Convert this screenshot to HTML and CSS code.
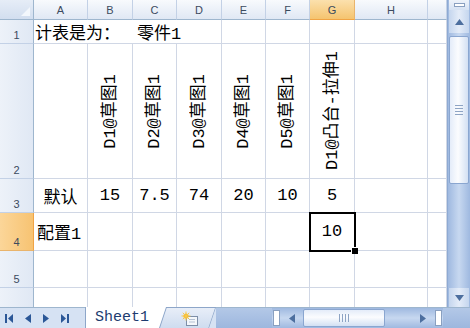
FILE: index.html
```html
<!DOCTYPE html>
<html lang="zh">
  <head>
    <meta charset="UTF-8" />
    <title>系列零件设计表</title>
    <link rel="stylesheet" href="styles.css">
  </head>
  <body>
    <div class="window">
      <div class="main">
        <div class="sheet">
          <div class="corner"></div>
          <div class="col-head">A</div>
          <div class="col-head">B</div>
          <div class="col-head">C</div>
          <div class="col-head">D</div>
          <div class="col-head">E</div>
          <div class="col-head">F</div>
          <div class="col-head active">G</div>
          <div class="col-head">H</div>
          <div class="col-head"></div>

          <div class="row-head">1</div>
          <div class="cell title">计表是为：<span class="part">零件1</span></div>
          <div class="cell"></div>
          <div class="cell"></div>
          <div class="cell"></div>
          <div class="cell"></div>
          <div class="cell"></div>

          <div class="row-head">2</div>
          <div class="cell"></div>
          <div class="cell vert"><span>D1@草图1</span></div>
          <div class="cell vert"><span>D2@草图1</span></div>
          <div class="cell vert"><span>D3@草图1</span></div>
          <div class="cell vert"><span>D4@草图1</span></div>
          <div class="cell vert"><span>D5@草图1</span></div>
          <div class="cell vert"><span>D1@凸台-拉伸1</span></div>
          <div class="cell"></div>
          <div class="cell"></div>

          <div class="row-head">3</div>
          <div class="cell">默认</div>
          <div class="cell">15</div>
          <div class="cell">7.5</div>
          <div class="cell">74</div>
          <div class="cell">20</div>
          <div class="cell">10</div>
          <div class="cell">5</div>
          <div class="cell"></div>
          <div class="cell"></div>

          <div class="row-head active">4</div>
          <div class="cell left">配置1</div>
          <div class="cell"></div>
          <div class="cell"></div>
          <div class="cell"></div>
          <div class="cell"></div>
          <div class="cell"></div>
          <div class="cell selected">10</div>
          <div class="cell"></div>
          <div class="cell"></div>

          <div class="row-head">5</div>
          <div class="cell"></div>
          <div class="cell"></div>
          <div class="cell"></div>
          <div class="cell"></div>
          <div class="cell"></div>
          <div class="cell"></div>
          <div class="cell"></div>
          <div class="cell"></div>
          <div class="cell"></div>

          <div class="row-head">6</div>
          <div class="cell"></div>
          <div class="cell"></div>
          <div class="cell"></div>
          <div class="cell"></div>
          <div class="cell"></div>
          <div class="cell"></div>
          <div class="cell"></div>
          <div class="cell"></div>
          <div class="cell"></div>
        </div>

        <div class="vscroll">
          <div class="split"><span></span></div>
          <div class="sb-btn up">
            <svg width="9" height="6" viewBox="0 0 9 6"><path d="M0 6 L4.5 0 L9 6 Z" fill="#4d6f9f"/></svg>
          </div>
          <div class="vthumb"><span></span><span></span><span></span><span></span></div>
          <div class="track"></div>
          <div class="sb-btn down">
            <svg width="9" height="6" viewBox="0 0 9 6"><path d="M0 0 L9 0 L4.5 6 Z" fill="#4d6f9f"/></svg>
          </div>
        </div>
      </div>

      <div class="tabbar">
        <div class="nav">
          <svg width="8" height="9" viewBox="0 0 8 9"><rect x="0" y="0" width="2" height="9" fill="#2b5797"/><path d="M8 0 L3 4.5 L8 9 Z" fill="#2b5797"/></svg>
          <svg width="6" height="9" viewBox="0 0 6 9"><path d="M6 0 L0 4.5 L6 9 Z" fill="#2b5797"/></svg>
          <svg width="6" height="9" viewBox="0 0 6 9"><path d="M0 0 L6 4.5 L0 9 Z" fill="#2b5797"/></svg>
          <svg width="8" height="9" viewBox="0 0 8 9"><path d="M0 0 L5 4.5 L0 9 Z" fill="#2b5797"/><rect x="6" y="0" width="2" height="9" fill="#2b5797"/></svg>
        </div>
        <div class="tab sheet-tab"><div class="tab-face">Sheet1</div></div>
        <div class="tab insert-tab">
          <div class="tab-face">
            <svg width="20" height="16" viewBox="0 0 20 16">
              <rect x="6.5" y="5.5" width="11" height="9" fill="#f4f7fb" stroke="#7d8ea8"/>
              <path d="M9 8.5 H15 M9 11 H15" stroke="#b5c2d4"/>
              <circle cx="6" cy="5" r="2.6" fill="#f7b52c"/>
              <path d="M6 0.5 V9.5 M1.5 5 H10.5 M2.8 1.8 L9.2 8.2 M9.2 1.8 L2.8 8.2" stroke="#f7c94a" stroke-width="1"/>
            </svg>
          </div>
        </div>
        <div class="blue-gap"></div>
        <div class="hscroll">
          <div class="hsplit"></div>
          <div class="hbtn">
            <svg width="6" height="9" viewBox="0 0 6 9"><path d="M6 0 L0 4.5 L6 9 Z" fill="#4d6f9f"/></svg>
          </div>
          <div class="hthumb"><span></span><span></span><span></span><span></span></div>
          <div class="htrack"></div>
          <div class="hbtn">
            <svg width="6" height="9" viewBox="0 0 6 9"><path d="M0 0 L6 4.5 L0 9 Z" fill="#4d6f9f"/></svg>
          </div>
          <div class="hsplit"></div>
        </div>
        <div class="corner-bottom"></div>
      </div>
    </div>
  </body>
</html>
```

FILE: styles.css
```css
* {
  box-sizing: border-box;
}
body {
  margin: 0;
  width: 470px;
  height: 328px;
  overflow: hidden;
  background: #fff;
  font-family: "Liberation Mono", "Noto Sans CJK SC", monospace;
}
.window {
  display: flex;
  flex-direction: column;
  width: 470px;
  height: 328px;
}
.main {
  display: flex;
  height: 307px;
}

/* grid of cells */
.sheet {
  width: 447px;
  height: 307px;
  overflow: hidden;
  display: grid;
  grid-template-columns: 34px 54px 45px 44px 45px 44px 44px 45px 73px 19px;
  grid-template-rows: 20px 24px 135px 34px 38px 37px 37px;
}
.corner {
  position: relative;
  background: linear-gradient(#e6edf7, #d2deef);
  border-right: 1px solid #9eb6ce;
  border-bottom: 1px solid #9eb6ce;
}
.corner::after {
  content: "";
  position: absolute;
  right: 3px;
  bottom: 3px;
  border-left: 9px solid transparent;
  border-bottom: 9px solid #f3f7fc;
}
.col-head {
  display: flex;
  align-items: center;
  justify-content: center;
  background: linear-gradient(#f8fafd, #e0e8f4);
  border-right: 1px solid #c3d1e6;
  border-bottom: 1px solid #9eb6ce;
  font: 11px "Liberation Sans", sans-serif;
  color: #3b4a5e;
}
.col-head.active {
  background: linear-gradient(#fbe0ad, #f5c46f);
  border-right-color: #e9b46c;
  border-bottom-color: #f0a445;
}
.row-head {
  display: flex;
  align-items: flex-end;
  justify-content: center;
  padding-bottom: 2px;
  background: linear-gradient(90deg, #edf2f9, #e0e8f4);
  border-right: 1px solid #9eb6ce;
  border-bottom: 1px solid #c3d1e6;
  font: 11px "Liberation Sans", sans-serif;
  color: #3b4a5e;
}
.row-head.active {
  background: linear-gradient(90deg, #fbd699, #f7c372);
  border-right-color: #f0a445;
  border-bottom-color: #e9b46c;
}
.cell {
  display: flex;
  align-items: center;
  justify-content: center;
  border-right: 1px solid #d0d7e5;
  border-bottom: 1px solid #d0d7e5;
  font-size: 17px;
  color: #000;
  white-space: pre;
}
.title {
  grid-column: span 4;
  justify-content: flex-start;
  padding-left: 1px;
}
.title .part {
  margin-left: 17px;
}
.left {
  justify-content: flex-start;
  padding-left: 3px;
}
.vert span {
  writing-mode: vertical-rl;
  text-orientation: sideways;
  transform: rotate(180deg);
  line-height: 1;
}
.selected {
  position: relative;
}
.selected::before {
  content: "";
  position: absolute;
  left: -1px;
  top: -1px;
  right: -2px;
  bottom: -2px;
  border: 2px solid #000;
}
.selected::after {
  content: "";
  position: absolute;
  right: -4px;
  bottom: -4px;
  width: 6px;
  height: 6px;
  background: #000;
  border-left: 1px solid #fff;
  border-top: 1px solid #fff;
}

/* vertical scrollbar */
.vscroll {
  width: 23px;
  height: 307px;
  display: flex;
  flex-direction: column;
  padding: 0 1px;
  background: linear-gradient(90deg, #9fb9e0, #c7d8f0 50%, #9fb9e0);
  border-left: 1px solid #8eaad3;
}
.split {
  height: 10px;
  display: flex;
  align-items: center;
  justify-content: center;
  background: linear-gradient(#eef3fa, #d6e2f3);
}
.split span {
  width: 11px;
  height: 4px;
  background: #fff;
  border: 1px solid #8aa0c0;
}
.sb-btn {
  display: flex;
  align-items: center;
  justify-content: center;
  background: linear-gradient(90deg, #c5d6ee, #e4ecf8 50%, #c5d6ee);
}
.sb-btn.up {
  height: 23px;
}
.sb-btn.down {
  height: 19px;
}
.vthumb {
  height: 148px;
  margin-top: 3px;
  display: flex;
  flex-direction: column;
  align-items: center;
  justify-content: center;
  gap: 2px;
  background: linear-gradient(90deg, #e4ecf9, #fbfcfe 45%, #d3e0f3);
  border: 1px solid #8aa6d0;
  border-radius: 2px;
}
.vthumb span {
  width: 8px;
  height: 1px;
  background: #8ea4c4;
}
.track {
  flex: 1;
}

/* sheet tabs and horizontal scrollbar */
.tabbar {
  display: flex;
  height: 21px;
  background: #d6e2f3;
  border-top: 1px solid #9eb6ce;
}
.nav {
  width: 85px;
  display: flex;
  align-items: center;
  gap: 12px;
  padding-left: 5px;
}
.tab {
  background: #8da6c9;
  margin-top: -1px;
}
.tab-face {
  height: 100%;
  display: flex;
  align-items: center;
  justify-content: center;
}
.sheet-tab {
  position: relative;
  z-index: 1;
  width: 82px;
  clip-path: polygon(0 0, 100% 0, calc(100% - 7px) 100%, 0 100%);
}
.sheet-tab .tab-face {
  margin: 0 1px 1px 1px;
  padding-right: 8px;
  background: #fff;
  clip-path: polygon(0 0, 100% 0, calc(100% - 7px) 100%, 0 100%);
  font-size: 15px;
  color: #1e3c70;
}
.insert-tab {
  width: 56px;
  margin-left: -7px;
  clip-path: polygon(0 0, 100% 0, calc(100% - 7px) 100%, 0 100%);
}
.insert-tab .tab-face {
  margin: 1px 1px 1px 0;
  padding-left: 4px;
  background: linear-gradient(#e8eef8, #cddbef);
  clip-path: polygon(0 0, 100% 0, calc(100% - 7px) 100%, 0 100%);
}
.blue-gap {
  width: 56px;
  background: linear-gradient(#b3c8e7, #9db7de);
}
.hscroll {
  flex: 1;
  display: flex;
  align-items: stretch;
  background: linear-gradient(#9fb9e0, #c7d8f0 50%, #9fb9e0);
  padding: 1px 0;
}
.hsplit {
  width: 7px;
  margin: 1px 1px;
  background: #fff;
  border: 1px solid #8aa0c0;
}
.hbtn {
  width: 22px;
  display: flex;
  align-items: center;
  justify-content: center;
}
.hthumb {
  width: 82px;
  display: flex;
  align-items: center;
  justify-content: center;
  gap: 2px;
  background: linear-gradient(#e4ecf9, #fbfcfe 45%, #d3e0f3);
  border: 1px solid #8aa6d0;
  border-radius: 2px;
}
.hthumb span {
  width: 1px;
  height: 8px;
  background: #8ea4c4;
}
.htrack {
  flex: 1;
}
.corner-bottom {
  width: 27px;
  background: linear-gradient(#b3c8e7, #9db7de);
}
```
